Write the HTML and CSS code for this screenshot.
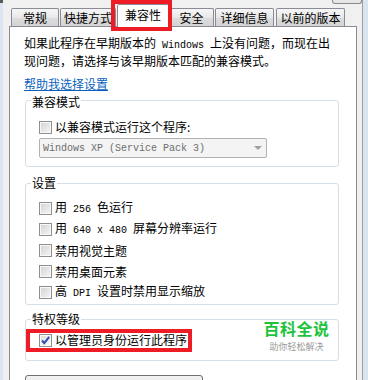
FILE: index.html
```html
<!DOCTYPE html>
<html lang="zh-CN">
<head>
<meta charset="utf-8">
<title>兼容性</title>
<link rel="stylesheet" href="styles.css">
</head>
<body>
<div class="frame">
  <div class="edge-left"></div>
  <div class="dialog">
    <div class="topbar"><div class="btn-edge"></div></div>
    <div class="tabs">
      <div class="tab t1">常规</div>
      <div class="tab t2">快捷方式</div>
      <div class="tab sel">兼容性</div>
      <div class="tab t4">安全</div>
      <div class="tab t5">详细信息</div>
      <div class="tab t6">以前的版本</div>
    </div>
    <div class="panel">
      <p class="intro">如果此程序在早期版本的<span class="m"> Windows </span>上没有问题，而现在出<br>现问题，请选择与该早期版本匹配的兼容模式。</p>
      <a class="help" href="#">帮助我选择设置</a>

      <div class="group g1">
        <div class="gtitle">兼容模式</div>
        <div class="row r-compat"><span class="cb"></span><span class="lbl">以兼容模式运行这个程序:</span></div>
        <div class="select"><span class="m sel-text">Windows XP (Service Pack 3)</span><span class="arrow"></span></div>
      </div>

      <div class="group g2">
        <div class="gtitle">设置</div>
        <div class="rows">
          <div class="row r-set"><span class="cb"></span><span class="lbl">用<span class="m"> 256 </span>色运行</span></div>
          <div class="row r-set"><span class="cb"></span><span class="lbl">用<span class="m"> 640 x 480 </span>屏幕分辨率运行</span></div>
          <div class="row r-set"><span class="cb"></span><span class="lbl">禁用视觉主题</span></div>
          <div class="row r-set"><span class="cb"></span><span class="lbl">禁用桌面元素</span></div>
          <div class="row r-set"><span class="cb"></span><span class="lbl">高<span class="m"> DPI </span>设置时禁用显示缩放</span></div>
        </div>
      </div>

      <div class="group g3">
        <div class="gtitle">特权等级</div>
        <div class="row r-admin">
          <span class="cb checked"><svg width="11" height="11" viewBox="0 0 11 11"><path d="M2 5.5 L4.3 8.2 L9.2 1.8" fill="none" stroke="#2f4fae" stroke-width="2"/></svg></span><span class="lbl">以管理员身份运行此程序</span>
        </div>
      </div>

      <div class="bigbtn"></div>
    </div>
  </div>
  <div class="edge-right"></div>
</div>
<div class="watermark">
  <div class="wm-title">百科全说</div>
  <div class="wm-sub">助你轻松解决</div>
</div>
</body>
</html>
```
FILE: styles.css
```css
html, body {
  margin: 0;
  padding: 0;
}
body {
  width: 368px;
  height: 380px;
  overflow: hidden;
  position: relative;
  font-family: "Noto Sans CJK SC", "Noto Sans", sans-serif;
  font-size: 12px;
  color: #000;
  background: #f0f0f0;
}
.frame {
  display: flex;
  height: 380px;
}
.edge-left {
  width: 3px;
  flex: none;
  background: linear-gradient(#5a5a5a 0 3px, #dbe5f1 3px);
}
.edge-right {
  width: 6px;
  flex: none;
  background: #dbe5f1;
  border-left: 1px solid #a0a0a0;
  box-sizing: border-box;
}
.dialog {
  flex: 1;
  background: #f0f0f0;
  display: flex;
  flex-direction: column;
  min-width: 0;
}
.topbar {
  height: 10px;
  display: flex;
  justify-content: flex-end;
}
.btn-edge {
  width: 30px;
  height: 4px;
  box-sizing: border-box;
  border: 1px solid #8a8a8a;
  border-top: none;
  border-radius: 0 0 3px 3px;
  background: #e6e6e6;
}
.tabs {
  display: flex;
  align-items: flex-end;
  height: 23px;
  padding-left: 8px;
  position: relative;
  z-index: 2;
}
.tab {
  box-sizing: border-box;
  height: 18px;
  margin-bottom: 1px;
  border: 1px solid #898c95;
  border-bottom: none;
  border-radius: 2px 2px 0 0;
  background: linear-gradient(#f6f6f6, #e8e8e8 50%, #dcdcdc 51%, #d4d4d4);
  display: flex;
  align-items: center;
  justify-content: center;
  line-height: 14px;
  white-space: nowrap;
}
.t1 { width: 48px; }
.t2 { width: 56px; margin-left: 1px; }
.sel {
  width: 52px;
  margin-left: 1px;
  height: 23px;
  margin-bottom: 0;
  background: #fff;
  padding-bottom: 3px;
  position: relative;
}
.sel::after {
  content: "";
  position: absolute;
  left: -7px;
  top: -5px;
  width: 61px;
  height: 31px;
  box-sizing: border-box;
  border: 4px solid #ee1c25;
}
.t4 { width: 45px; }
.t5 { width: 59px; margin-left: 1px; }
.t6 { width: 69px; margin-left: 2px; }

.panel {
  flex: 1;
  margin: -1px 5px 0 6px;
  background: #fff;
  border: 1px solid #898c95;
  border-bottom: none;
  padding: 8px 17px 0 14px;
  position: relative;
  z-index: 1;
}
.intro {
  margin: 0;
  line-height: 15px;
  white-space: nowrap;
}
.m {
  font-family: "Liberation Mono", "DejaVu Sans Mono", monospace;
  font-size: 10px;
}
.help {
  display: block;
  margin-top: 10px;
  line-height: 12px;
  color: #0a5fc0;
  text-decoration: underline;
  width: max-content;
}
.group {
  border: 1px solid #d5dfe5;
  border-radius: 3px;
  margin-left: 1px;
  display: flex;
  flex-direction: column;
}
.gtitle {
  align-self: flex-start;
  margin: -7px 0 0 5px;
  padding: 0 1px;
  background: #fff;
  line-height: 12px;
}
.g1 .gtitle {
  margin-top: -6px;
  line-height: 13px;
}
.g1 { margin-top: 10px; padding-bottom: 8px; }
.g2 { margin-top: 16px; padding-bottom: 1px; }
.g3 { margin-top: 14px; padding-bottom: 12px; }

.row {
  display: flex;
  align-items: center;
  padding-left: 13px;
}
.lbl {
  margin-left: 3px;
  line-height: 14px;
  white-space: nowrap;
}
.r-compat { height: 16px; margin-top: 11px; }
.rows { margin-top: 9px; }
.r-set { height: 21px; }
.r-admin {
  height: 16px;
  margin-top: 7px;
  align-self: flex-start;
  position: relative;
}
.r-admin::after {
  content: "";
  position: absolute;
  left: 0;
  top: -3px;
  width: 166px;
  height: 23px;
  box-sizing: border-box;
  border: 4px solid #ee1c25;
}
.cb {
  width: 13px;
  height: 13px;
  flex: none;
  box-sizing: border-box;
  border: 1px solid #8e8f8f;
  background: linear-gradient(135deg, #d2d2d2, #f6f6f6);
  box-shadow: inset 0 0 0 1px #f8f8f8;
  display: flex;
  align-items: center;
  justify-content: center;
}
.cb.checked {
  background: linear-gradient(135deg, #dcdcdc, #fafafa);
}
.select {
  margin: 3px 0 0 13px;
  width: 228px;
  height: 20px;
  box-sizing: border-box;
  border: 1px solid #adb2b5;
  border-radius: 2px;
  background: #f4f4f4;
  display: flex;
  align-items: center;
  padding-left: 3px;
  position: relative;
}
.sel-text {
  color: #6d6d6d;
  flex: 1;
  white-space: nowrap;
}
.arrow {
  width: 0;
  height: 0;
  border-left: 4px solid transparent;
  border-right: 4px solid transparent;
  border-top: 4px solid #a0a0a0;
  margin-right: 4px;
}
.bigbtn {
  margin: 14px 0 0 1px;
  width: 178px;
  height: 24px;
  box-sizing: border-box;
  border: 1px solid #707070;
  border-radius: 3px;
  background: linear-gradient(#f2f2f2, #dddddd);
}
.watermark {
  position: absolute;
  left: 263px;
  top: 319px;
  z-index: 5;
  text-align: center;
  width: 67px;
}
.wm-title {
  color: #1ec33c;
  font-weight: 700;
  font-size: 16px;
  line-height: 18px;
  letter-spacing: 0.5px;
}
.wm-sub {
  color: #9a9a9a;
  font-size: 9px;
  line-height: 10px;
  margin-top: 5px;
}
```
